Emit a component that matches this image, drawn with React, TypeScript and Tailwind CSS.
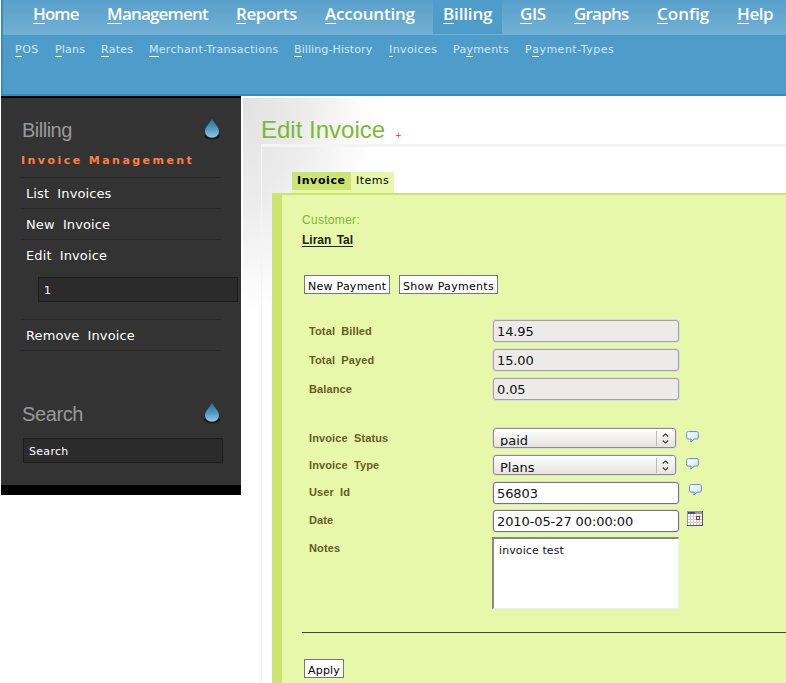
import React from "react";

const mainNav = [
  { k: "H", rest: "ome", box: "w-[74px]", ls: "tracking-[-0.9px]" },
  { k: "M", rest: "anagement", box: "w-[129px]", ls: "tracking-[-0.8px]" },
  { k: "R", rest: "eports", box: "w-[89px]", ls: "tracking-[-0.45px]" },
  { k: "A", rest: "ccounting", box: "w-[118px]", ls: "tracking-[-0.2px]" },
  { k: "B", rest: "illing", box: "w-[69px] mr-2 bg-[#4e9cc9]", ls: "tracking-[-0.15px]" },
  { k: "G", rest: "IS", box: "w-[54px]", ls: "tracking-[-0.4px]" },
  { k: "G", rest: "raphs", box: "w-[83px]", ls: "tracking-[-0.8px]" },
  { k: "C", rest: "onfig", box: "w-[80px]", ls: "tracking-[0px]" },
  { k: "H", rest: "elp", box: "w-[59px]", ls: "tracking-[-0.4px]" },
];

const subNav = [
  { pre: "", k: "P", rest: "OS", w: "w-[40px] tracking-[0.5px]" },
  { pre: "", k: "P", rest: "lans", w: "w-[46px] tracking-[0.2px]" },
  { pre: "", k: "R", rest: "ates", w: "w-[48px] tracking-[0.2px]" },
  { pre: "", k: "M", rest: "erchant-Transactions", w: "w-[145px] tracking-[0.3px]" },
  { pre: "", k: "B", rest: "illing-History", w: "w-[95px] tracking-[0.1px]" },
  { pre: "", k: "I", rest: "nvoices", w: "w-[64px] tracking-[0.4px]" },
  { pre: "Pa", k: "y", rest: "ments", w: "w-[72px] tracking-[0.25px]" },
  { pre: "P", k: "a", rest: "yment-Types", w: "w-[100px] tracking-[0.5px]" },
];

function Key({ children }: { children: string }) {
  return <span className="inline-block border-b border-white">{children}</span>;
}

function Drop() {
  return (
    <svg className="mt-px -mr-px block h-6 w-5 shrink-0" viewBox="0 0 20 24">
      <defs>
        <linearGradient id="drop" x1="0" y1="0" x2="0" y2="1">
          <stop offset="0" stopColor="#276f9a" />
          <stop offset=".55" stopColor="#4e9cc9" />
          <stop offset="1" stopColor="#9cc6de" />
        </linearGradient>
      </defs>
      <ellipse cx="10" cy="18" rx="8" ry="3.4" fill="#1b1b1b" />
      <path d="M10 .5C8.800 4.500 3 8.500 3 13.500a7 6.200 0 0 0 14 0C17 8.500 11.200 4.500 10 .5Z" fill="url(#drop)" />
    </svg>
  );
}

function Bubble({ at }: { at: string }) {
  return (
    <svg className={`block h-[12px] w-[13px] shrink-0 ${at}`} viewBox="0 0 13 12">
      <defs>
        <linearGradient id="bubble" x1="0" y1="0" x2="1" y2="1">
          <stop offset="0" stopColor="#ffffff" />
          <stop offset="1" stopColor="#c9e0fb" />
        </linearGradient>
      </defs>
      <path
        d="M2.500.6h8c1.400 0 1.900.7 1.900 2v3.400c0 1.400-.6 2.100-1.900 2.100H8.300L4.800 11 5.200 8.100H2.500C1.200 8.100.6 7.400.6 6V2.600C.6 1.300 1.200.6 2.500.6Z"
        fill="url(#bubble)"
        stroke="#5a8ec4"
      />
    </svg>
  );
}

function CalendarIcon() {
  return (
    <svg className="mt-[1px] ml-2 block h-[15px] w-4 shrink-0" viewBox="0 0 16 15" shapeRendering="crispEdges">
      <rect width="16" height="15" fill="#555" />
      <rect width="15" height="14" fill="#999" />
      <rect x="1" y="3" width="14" height="11" fill="#ccc" />
      <rect x="1" y="1" width="7" height="2" fill="#4444aa" />
      {[1, 4, 7, 10, 13].map((x) =>
        [3, 6, 9, 12].map((y) => <rect key={`${x}-${y}`} x={x} y={y} width="2" height="2" fill="#fff" />)
      )}
      <rect x="9.500" y="5.500" width="3" height="3" fill="#fff" stroke="#b03030" />
    </svg>
  );
}

function MenuItem({ text }: { text: string }) {
  return (
    <li className="h-[31px] border-t border-[#292929] pl-[5px] text-[13px] leading-[31px] tracking-[0.1px] [word-spacing:4px]">
      {text}
    </li>
  );
}

function Label({ text, line = "leading-[22px]" }: { text: string; line?: string }) {
  return (
    <span className={`w-[184px] shrink-0 pl-[7px] font-['Liberation_Sans',Arial,sans-serif] text-[11px] font-bold tracking-[0.12px] text-[#665c20] [word-spacing:3px] ${line}`}>
      {text}
    </span>
  );
}

function Field({ label, value, readOnly, gap, icon, line }: { label: string; value: string; readOnly?: boolean; gap: string; icon?: React.ReactNode; line?: string }) {
  return (
    <div className={`flex h-[22px] ${gap}`}>
      <Label text={label} line={line} />
      <div
        className={`ml-[7px] h-[22px] w-[186px] shrink-0 rounded-[3px] border pl-[3px] text-[13px] leading-[22px] tracking-[-0.1px] text-[#111] shadow-[0_0_0_1px_#dedfd5] ${
          readOnly ? "border-[#a3a1a1] bg-[#ecebe9]" : "border-[#777173] bg-white"
        }`}
      >
        {value}
      </div>
      {icon}
    </div>
  );
}

function Select({ label, value, gap }: { label: string; value: string; gap: string }) {
  return (
    <div className={`flex h-5 ${gap}`}>
      <Label text={label} line="leading-[20px]" />
      <div className="ml-[7px] flex h-5 w-[183px] shrink-0 overflow-hidden rounded-[3px] border border-[#8e8a8b] bg-linear-to-b from-white to-[#e4e3e1] shadow-[0_0_0_1px_#dedfd5]">
        <span className="h-[17px] flex-1 overflow-hidden pl-[6px] text-[13px] leading-[24px] text-[#111]">{value}</span>
        <span className="mt-[2px] h-[15px] w-px bg-[#bbb]" />
        <svg className="mt-1 mr-[6px] ml-[5px] block h-[11px] w-[7px]" viewBox="0 0 7 11" fill="none" stroke="#333" strokeWidth="1.100">
          <path d="M.8 3.500 3.500.9 6.200 3.500M.8 7.500 3.500 10.100 6.200 7.500" />
        </svg>
      </div>
      <Bubble at="ml-[10px] mt-[3px]" />
    </div>
  );
}

function Button({ text, size }: { text: string; size: string }) {
  return (
    <button className={`block h-[19px] border border-[#777] bg-white pt-px text-left pl-[3px] text-[11px] leading-[20px] whitespace-nowrap text-black ${size}`}>
      {text}
    </button>
  );
}

export default function App() {
  return (
    <div className="h-[683px] w-[786px] overflow-hidden bg-white pl-px font-['DejaVu_Sans',Verdana,sans-serif]">
      <header className="h-24 border-b-2 border-l-2 border-[#3a8bbb] bg-[#4e9cc9]">
        <nav className="flex h-[35px] bg-linear-to-b from-[#58a0cc] to-[#72b0d4] pl-5 font-['Open_Sans','Noto_Sans',sans-serif] text-[17px] font-semibold text-white">
          {mainNav.map((n) => (
            <a key={n.k + n.rest} className={`block h-[34px] shrink-0 pl-[10px] leading-[18px] whitespace-nowrap ${n.box}`}>
              <span className={`inline-block pt-[5px] ${n.ls}`}>
                <Key>{n.k}</Key>
                {n.rest}
              </span>
            </a>
          ))}
        </nav>
        <nav className="flex pt-[9px] pl-3 text-[11px] leading-[12px] text-[#d3e7f2]">
          {subNav.map((n) => (
            <a key={n.rest} className={`block shrink-0 whitespace-nowrap ${n.w}`}>
              {n.pre}
              <Key>{n.k}</Key>
              {n.rest}
            </a>
          ))}
        </nav>
      </header>
      <div className="flex">
        <aside className="h-[399px] w-60 shrink-0 border-t-2 border-b-10 border-black bg-[#333] pl-5 text-white">
          <div className="flex h-[53px] w-[200px] items-start justify-between pt-[19px]">
            <h2 className="pl-px font-['Liberation_Sans',Arial,sans-serif] text-[20px] leading-[26px] tracking-[-0.5px] text-[#999]">Billing</h2>
            <Drop />
          </div>
          <h3 className="h-[26px] text-[11px] leading-[19px] font-bold tracking-[2.45px] whitespace-nowrap text-[#ff7f3f]">Invoice Management</h3>
          <ul className="w-[200px]">
            <MenuItem text="List Invoices" />
            <MenuItem text="New Invoice" />
            <MenuItem text="Edit Invoice" />
          </ul>
          <div className="mt-[7px] ml-[17px] h-[25px] w-[200px] border border-[#1d1d1d] bg-[#2b2b2b] pl-[5px] text-[11px] leading-[25px]">1</div>
          <ul className="mt-[17px] h-8 w-[200px] border-b border-[#292929]">
            <MenuItem text="Remove Invoice" />
          </ul>
          <div className="mt-[50px] flex h-[37px] w-[200px] items-start justify-between">
            <h2 className="pl-px font-['Liberation_Sans',Arial,sans-serif] text-[20px] leading-[26px] tracking-[-0.4px] text-[#999]">Search</h2>
            <Drop />
          </div>
          <div className="ml-[2px] h-[25px] w-[200px] border border-[#1d1d1d] bg-[#2b2b2b] pl-[5px] text-[11px] leading-[25px] tracking-[0.3px]">Search</div>
        </aside>
        <main className="mt-[2px] ml-[2px] h-[585px] flex-1 bg-[radial-gradient(ellipse_130px_215px_at_0_0,#e2e2e2_0%,#ebebeb_45%,#ffffff_100%)] pl-[18px]">
          <h1 className="flex h-[46px] pt-[17px] font-['Liberation_Sans',Arial,sans-serif] text-[24px] leading-[29px] text-[#7cb834]">
            <span>Edit Invoice</span>
            <span className="ml-[10px] pt-[6px] font-['DejaVu_Sans',sans-serif] text-[8px] text-[#ff2020]">+</span>
          </h1>
          <div className="h-[539px] border-t-[3px] border-l border-[#f4f4f4] pl-[10px]">
            <div className="ml-5 flex h-[46px] items-end text-[11px] text-black">
              <div className="flex h-[21px] bg-[#e8f8ab]">
                <span className="h-[18px] w-[59px] bg-[#cde472] pl-[5px] leading-[17px] font-bold tracking-[0.6px] whitespace-nowrap">Invoice</span>
                <span className="w-[43px] pl-[5px] leading-[17px] tracking-[0.5px] whitespace-nowrap">Items</span>
              </div>
            </div>
            <section className="h-[490px] border-t-2 border-l-10 border-[#cde472] bg-[#e8f8ab] pl-5">
              <p className="pt-[17px] font-['Liberation_Sans',Arial,sans-serif] text-[12px] leading-[16px] tracking-[0.3px] text-[#7cb834]">Customer:</p>
              <p className="h-[47px] pt-1 font-['Liberation_Sans',Arial,sans-serif] text-[12px] leading-[16px] font-bold text-[#222] [word-spacing:2px]">
                <span className="inline-block h-[14px] border-b border-[#222] leading-[15px]">Liran Tal</span>
              </p>
              <div className="flex h-[45px] gap-[9px] pl-[2px]">
                <Button text="New Payment" size="w-[86px] tracking-[0.25px]" />
                <Button text="Show Payments" size="w-[99px] tracking-[0.3px]" />
              </div>
              <Field label="Total Billed" value="14.95" readOnly gap="mb-[7px]" />
              <Field label="Total Payed" value="15.00" readOnly gap="mb-[7px]" />
              <Field label="Balance" value="0.05" readOnly gap="mb-7" />
              <Select label="Invoice Status" value="paid" gap="mb-[7px]" />
              <Select label="Invoice Type" value="Plans" gap="mb-[7px]" />
              <Field label="User Id" value="56803" gap="mb-[6px]" line="leading-[20px]" icon={<Bubble at="ml-[10px] mt-[2px]" />} />
              <Field label="Date" value="2010-05-27 00:00:00" gap="mb-[5px]" line="leading-[20px]" icon={<CalendarIcon />} />
              <div className="flex h-[95px]">
                <Label text="Notes" />
                <div className="ml-[6px] h-[72px] w-[187px] border-t-2 border-r border-b border-l-2 border-t-[#888] border-r-[#eee] border-b-[#eee] border-l-[#888] bg-white pt-[5px] pl-[5px] text-[11px] leading-[14px] tracking-[0.1px] text-[#111]">
                  invoice test
                </div>
              </div>
              <hr className="mb-[26px] h-px border-0 bg-[#444]" />
              <div className="pl-[2px]">
                <Button text="Apply" size="w-[40px] tracking-[0.2px]" />
              </div>
            </section>
          </div>
        </main>
      </div>
    </div>
  );
}
